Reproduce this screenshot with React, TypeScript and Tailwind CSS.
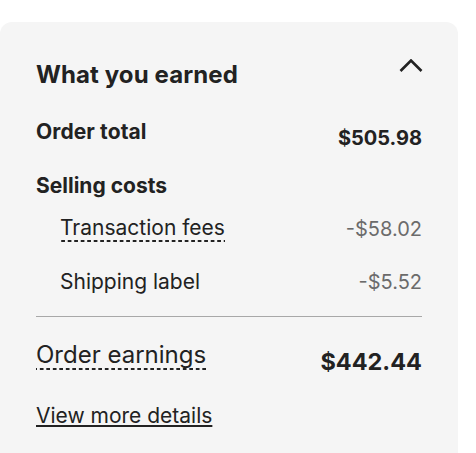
import React from 'react';

const dashed =
  'inline-block bg-[linear-gradient(to_right,#222222_4px,transparent_4px)] bg-[length:6.5px_2px] bg-repeat-x bg-bottom pb-[2px]';

const App: React.FC = () => {
  return (
    <div className="min-h-screen bg-white font-['Inter',sans-serif] text-[#222222] pt-[22px]">
      <div className="w-[458px] rounded-t-xl bg-[#f5f5f5] px-9 pt-[33px] pb-[23px]">
        <div className="flex items-start justify-between">
          <h2 className="text-[24px] font-bold leading-[40px] tracking-[0.1px]">What you earned</h2>
          <svg width="24" height="14" viewBox="0 0 24 14" className="mt-[4px] -mr-[1px]">
            <path d="M1.5 12 L12 1.5 L22.5 12" fill="none" stroke="#222222" strokeWidth="2.6" />
          </svg>
        </div>

        <div className="mt-[23px] flex items-start justify-between">
          <span className="text-[21px] font-bold leading-[28px] tracking-[0.1px]">Order total</span>
          <span className="mt-[6px] text-[20px] font-bold leading-[28px]">$505.98</span>
        </div>

        <div className="mt-[20px] text-[21px] font-bold leading-[28px]">Selling costs</div>

        <div className="mt-[16px] flex items-center justify-between pl-6">
          <span className={`text-[21px] leading-[24px] ${dashed}`}>Transaction fees</span>
          <span className="text-[20px] leading-[24px] text-[#6b6b6b]">-$58.02</span>
        </div>

        <div className="mt-[28px] flex items-center justify-between pl-6">
          <span className="text-[21px] leading-[24px]">Shipping label</span>
          <span className="text-[20px] leading-[24px] text-[#6b6b6b]">-$5.52</span>
        </div>

        <div className="mt-[22px] h-px bg-[#a8a8a8]" />

        <div className="mt-[25px] flex items-start justify-between">
          <span className={`text-[24px] leading-[26px] ${dashed}`}>Order earnings</span>
          <span className="mt-[5px] text-[23.5px] font-bold leading-[30px]">$442.44</span>
        </div>

        <div className="mt-[25px]">
          <a className="text-[21px] leading-[28px] underline decoration-2 underline-offset-[2px]">
            View more details
          </a>
        </div>
      </div>
    </div>
  );
};

export default App;
